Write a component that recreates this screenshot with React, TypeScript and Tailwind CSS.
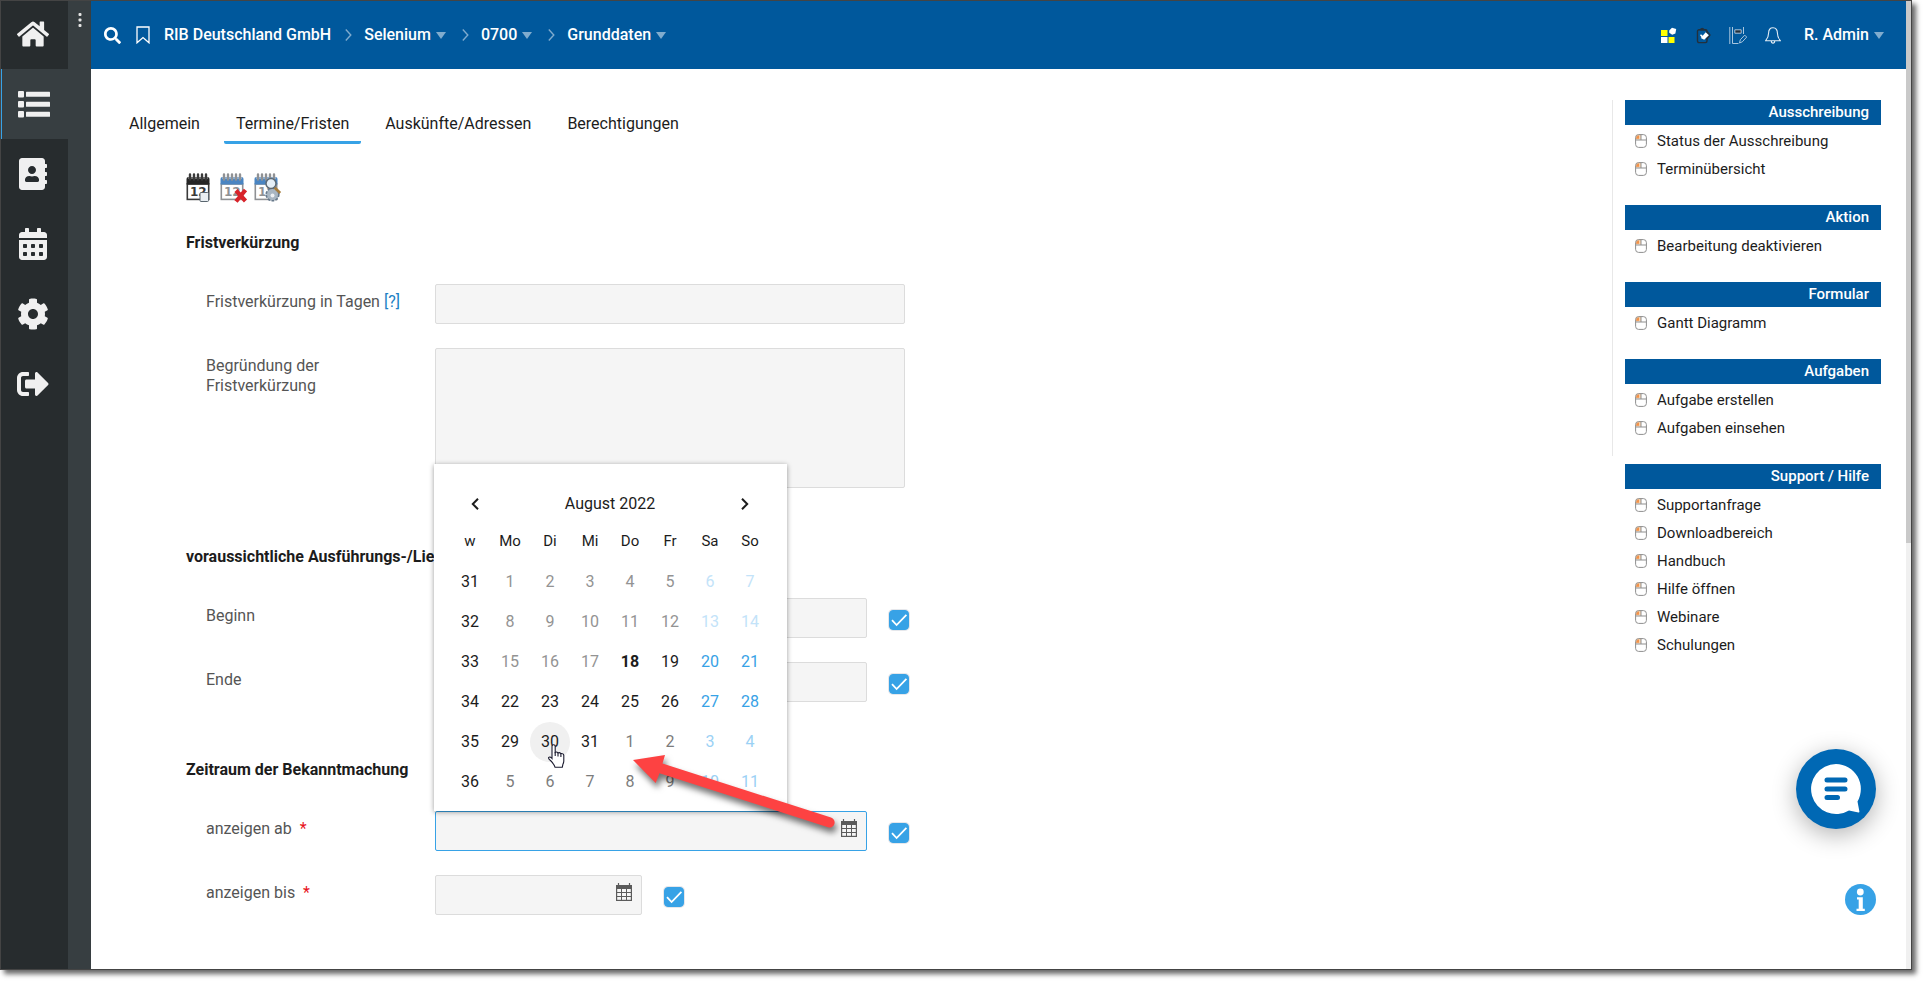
import { useState } from 'react';
import type { ReactNode } from 'react';
import { FaAddressBook, FaCalendarAlt, FaCog, FaHome, FaSearch, FaSignOutAlt } from 'react-icons/fa';

const crumbs = [
  { label: 'RIB Deutschland GmbH', menu: false },
  { label: 'Selenium', menu: true },
  { label: '0700', menu: true },
  { label: 'Grunddaten', menu: true }
];

const tabs = ['Allgemein', 'Termine/Fristen', 'Auskünfte/Adressen', 'Berechtigungen'];

const sideMenu = [
  { title: 'Ausschreibung', items: ['Status der Ausschreibung', 'Terminübersicht'] },
  { title: 'Aktion', items: ['Bearbeitung deaktivieren'] },
  { title: 'Formular', items: ['Gantt Diagramm'] },
  { title: 'Aufgaben', items: ['Aufgabe erstellen', 'Aufgaben einsehen'] }
];

const supportMenu = {
  title: 'Support / Hilfe',
  items: ['Supportanfrage', 'Downloadbereich', 'Handbuch', 'Hilfe öffnen', 'Webinare', 'Schulungen']
};

const weekDays = ['w', 'Mo', 'Di', 'Mi', 'Do', 'Fr', 'Sa', 'So'];

const weeks = [
  { week: 31, days: [1, 2, 3, 4, 5, 6, 7] },
  { week: 32, days: [8, 9, 10, 11, 12, 13, 14] },
  { week: 33, days: [15, 16, 17, 18, 19, 20, 21] },
  { week: 34, days: [22, 23, 24, 25, 26, 27, 28] },
  { week: 35, days: [29, 30, 31, 1, 2, 3, 4] },
  { week: 36, days: [5, 6, 7, 8, 9, 10, 11] }
];

const TODAY = 18;

// days before today are faded, the trailing days belong to September
function dayClass(index: number, col: number) {
  const dayNo = index * 7 + col + 1;
  const weekend = col > 4;
  if (dayNo === TODAY) return 'font-bold text-[#1c1c1c]';
  if (dayNo < TODAY) return weekend ? 'text-[#c3e3f9]' : 'text-[#939393]';
  if (dayNo > 31) return weekend ? 'text-[#9bd1f5]' : 'text-[#7c7c7c]';
  return weekend ? 'text-[#37a2e6]' : 'text-[#1c1c1c]';
}

function ListIcon() {
  return (
    <svg width="32" height="27" viewBox="0 0 32 27" fill="currentColor">
      {[0, 10, 20].map((y) => (
        <g key={y}>
          <rect x="0" y={y} width="6" height="6.5" rx="1" />
          <rect x="8" y={y + 0.8} width="24" height="5" rx="0.5" />
        </g>
      ))}
    </svg>
  );
}

function Caret() {
  return (
    <svg width="10" height="7" viewBox="0 0 10 7" fill="#fff" fillOpacity="0.5">
      <path d="M0 0h10L5 7z" />
    </svg>
  );
}

function CrumbArrow() {
  return (
    <svg width="7" height="12" viewBox="0 0 7 12" fill="none" stroke="#7fabce" strokeWidth="1.4">
      <path d="M.8.6 5.8 6 .8 11.4" />
    </svg>
  );
}

function MouseIcon() {
  return (
    <svg width="12" height="14" viewBox="0 0 12 14" fill="none" className="shrink-0">
      <path d="M.6 2.6q0-2 2-2H6v5H.6z" fill="#fbd3ac" />
      <path d="M1 4.8 1.6 2.4 4 1.2v3.6z" fill="#f2924a" />
      <rect x=".6" y=".6" width="10.8" height="12.8" rx="3" stroke="#8f8f8f" />
      <path d="M.6 6h10.8M6 .6V6" stroke="#8f8f8f" />
    </svg>
  );
}

function CalendarSheet({ head, line, children }: { head: string; line: string; children: ReactNode }) {
  return (
    <svg width="28" height="30" viewBox="0 0 28 30">
      <rect x="1.3" y="11" width="21.4" height="15.4" fill="#fff" stroke={line} strokeWidth="1.6" />
      <text x="4" y="22.5" fontSize="12" fontWeight="700" fontFamily="DejaVu Sans, sans-serif" fill={line}>12</text>
      <path d="M.5 6q0-2 2-2h19q2 0 2 2v5.6H.5z" fill={head} />
      <path d="M4 1v5M8 1v5M12 1v5M16 1v5M20 1v5" stroke="#fff" strokeOpacity="0.6" strokeWidth="3.2" />
      <path d="M4 1.5v5M8 1.5v5M12 1.5v5M16 1.5v5M20 1.5v5" stroke={line} strokeWidth="2.4" strokeLinecap="round" />
      {children}
    </svg>
  );
}

function FieldCalendarIcon() {
  return (
    <svg width="16" height="18" viewBox="0 0 16 18" fill="none" stroke="#5b5b5b">
      <path d="M2.5 0v3M13.5 0v3" strokeWidth="1.2" />
      <path d="M0 2h16v4H0z" fill="#5b5b5b" stroke="none" />
      <rect x=".6" y="2.6" width="14.8" height="14.8" strokeWidth="1.2" />
      <path d="M5.5 5v12M10.5 5v12M0 9.5h16M0 13.5h16" />
    </svg>
  );
}

function Check({ label }: { label: string }) {
  return (
    <span className="relative mt-3 h-5 w-5 shrink-0">
      <input
        type="checkbox"
        defaultChecked
        aria-label={label}
        className="peer block h-5 w-5 appearance-none rounded border border-gray-300 bg-white ring-1 ring-gray-200 checked:border-[#37a2e6] checked:bg-[#37a2e6]"
      />
      <svg
        viewBox="0 0 20 20"
        className="pointer-events-none absolute inset-0 hidden h-5 w-5 peer-checked:block"
        fill="none"
        stroke="#fff"
        strokeWidth="1.8"
      >
        <path d="M3 10.2 7.6 15 17.4 4.8" />
      </svg>
    </span>
  );
}

function Row({ id, label, children }: { id: string; label: ReactNode; children: ReactNode }) {
  return (
    <div className="flex items-start pl-5">
      <div className="w-[229px] shrink-0 pt-2 pr-5 leading-5 text-[#555]">
        <label htmlFor={id}>{label}</label>
        {id === 'tage' && <a href="#hilfe" className="text-[#1c7fc4]"> [?]</a>}
      </div>
      {children}
    </div>
  );
}

const fieldClass = 'block w-full rounded-xs border bg-[#f5f5f5] px-3 outline-none';

function DateRow({ id, label, required, short, active, picker, children }: {
  id: string;
  label: string;
  required?: boolean;
  short?: boolean;
  active?: boolean;
  picker?: boolean;
  children?: ReactNode;
}) {
  return (
    <Row id={id} label={<>{label}{required && <span className="pl-1 text-[#e8131a]"> *</span>}</>}>
      <div className="flex gap-[22px]">
        <div className={short ? 'relative w-[207px]' : 'relative w-[432px]'}>
          <input id={id} type="text" className={`${fieldClass} h-10 ${active ? 'border-[#37a2e6]' : 'border-[#dcdcdc]'}`} />
          {picker && (
            <button type="button" aria-label="Kalender" className="absolute top-2 right-[10px]">
              <FieldCalendarIcon />
            </button>
          )}
          {children}
        </div>
        <Check label={label} />
      </div>
    </Row>
  );
}

function DatePicker() {
  return (
    <div className="absolute bottom-full -left-px z-10 w-[353px] bg-white pt-5 pr-[17px] pb-[9px] pl-4 text-[#1c1c1c] shadow-[0_1px_5px_rgba(0,0,0,0.4)]">
      <div className="flex h-10 items-center justify-between px-[21px]">
        <button type="button" aria-label="Voriger Monat">
          <svg width="8" height="12" viewBox="0 0 8 12" fill="none" stroke="currentColor" strokeWidth="2"><path d="M7 .8 1.8 6 7 11.2" /></svg>
        </button>
        <span>August 2022</span>
        <button type="button" aria-label="Nächster Monat">
          <svg width="8" height="12" viewBox="0 0 8 12" fill="none" stroke="currentColor" strokeWidth="2"><path d="M1 .8 6.2 6 1 11.2" /></svg>
        </button>
      </div>
      <table className="w-full table-fixed text-center">
        <thead>
          <tr className="h-[38px] text-[15px]">
            {weekDays.map((d) => <th key={d} className="p-0 pb-[3px] font-normal">{d}</th>)}
          </tr>
        </thead>
        <tbody>
          {weeks.map((w, i) => (
            <tr key={w.week} className="h-10">
              <th className="p-0 font-normal">{w.week}</th>
              {w.days.map((day, col) => {
                const hovered = day === 30;
                return (
                  <td key={day} className="p-0">
                    <button type="button" className={`relative block h-10 w-full rounded-full ${dayClass(i, col)} ${hovered ? 'bg-[#f0f0f0]' : ''}`}>
                      {day}
                      {hovered && (
                        <svg width="18" height="24" viewBox="0 0 18 24" className="absolute top-[22px] left-[17px]">
                          <path
                            d="M5 14.5V2.4Q5 .8 6.6.8t1.6 1.6v6q1.5-1 2.8.5 1.6-.9 2.8.7 2.8-.4 3 2V17q0 1.5-.8 3l-.7 3.2H8q-1-3-4-6.2Q1 14.5 1.6 13.6q1.2-1.5 3.4.9z"
                            fill="#fff"
                            stroke="#1a1a2e"
                            strokeWidth="1.1"
                          />
                          <path d="M8.2 8v4M11 9v3.4M13.9 10v3" stroke="#1a1a2e" strokeWidth="1.1" />
                        </svg>
                      )}
                    </button>
                  </td>
                );
              })}
            </tr>
          ))}
        </tbody>
      </table>
    </div>
  );
}

function HintArrow() {
  return (
    <svg width="220" height="100" viewBox="0 0 220 100" className="pointer-events-none absolute -top-[62px] left-[190px] z-20 drop-shadow-[2px_5px_3px_rgba(0,0,0,0.55)]">
      <path d="M8 11 40 6 37.5 14.6 206 68.5a5 5 0 0 1-3 9.8L34.500 24.200 30.700 34z" fill="#fd4242" />
    </svg>
  );
}

function Section({ title, className, children }: { title: string; className: string; children: ReactNode }) {
  return (
    <section className={className}>
      <h2 className="mb-[29px] leading-6 font-bold text-[#1c1c1c]">{title}</h2>
      <div className="flex flex-col gap-6">{children}</div>
    </section>
  );
}

function MenuBlock({ title, items }: { title: string; items: string[] }) {
  return (
    <section className="text-[15px]">
      <h3 className="mb-[2px] bg-[#00589c] px-3 text-right leading-[25px] font-medium text-white">{title}</h3>
      <ul>
        {items.map((item) => (
          <li key={item}>
            <a href="#menu" className="flex h-7 items-center gap-[10px] pl-[10px] text-[#1c1c1c]">
              <MouseIcon />
              {item}
            </a>
          </li>
        ))}
      </ul>
    </section>
  );
}

export default function App() {
  const [tab, setTab] = useState('Termine/Fristen');

  const navClass = 'flex h-[70px] items-center justify-center pr-[3px]';

  return (
    <div className="flex h-screen min-h-[900px] bg-white pr-[15px] pb-[15px] font-[Roboto,sans-serif] text-base">
      <div className="flex flex-1 border border-[#444] shadow-[4px_4px_5px_rgba(0,0,0,0.6)]">
        <nav className="w-[67px] shrink-0 bg-[#272c2e] text-[#f0f0f0]">
          <a href="#start" aria-label="Start" className="flex h-[68px] items-center justify-center pr-[3px] pb-[2px]"><FaHome size={32} /></a>
          <a href="#liste" aria-label="Liste" className={`${navClass} border-l border-[#37a2e6] bg-[#373e41]`}><ListIcon /></a>
          <a href="#adressen" aria-label="Adressbuch" className={navClass}><FaAddressBook size={32} /></a>
          <a href="#kalender" aria-label="Kalender" className={navClass}><FaCalendarAlt size={32} /></a>
          <a href="#einstellungen" aria-label="Einstellungen" className={navClass}><FaCog size={32} /></a>
          <a href="#abmelden" aria-label="Abmelden" className={navClass}><FaSignOutAlt size={32} /></a>
        </nav>
        <div className="w-[23px] shrink-0 bg-[#373e41] pt-3">
          <button type="button" aria-label="Menü" className="block pl-[10px]">
            <svg width="4" height="14" viewBox="0 0 4 14" fill="#e4e4e4">
              <rect x=".5" y="0" width="3" height="3" rx="1" />
              <rect x=".5" y="5.5" width="3" height="3" rx="1" />
              <rect x=".5" y="11" width="3" height="3" rx="1" />
            </svg>
          </button>
        </div>

        <div className="relative flex min-w-0 flex-1 flex-col">
          <header className="flex h-[68px] items-center bg-[#00589c] pr-[22px] pl-[13px] font-medium text-white">
            <button type="button" aria-label="Suche"><FaSearch size={17} /></button>
            <button type="button" aria-label="Lesezeichen" className="ml-[15px]">
              <svg width="14" height="18" viewBox="0 0 14 18" fill="none" stroke="#fff" strokeWidth="1.3">
                <path d="M1 1h12v15.8l-6-5.3-6 5.3z" />
              </svg>
            </button>
            <ol className="ml-[14px] flex items-center">
              {crumbs.map((c, i) => (
                <li key={c.label} className="flex items-center">
                  {i > 0 && <span className={i === 1 ? 'pr-3 pl-[14px]' : 'pr-3 pl-4'}><CrumbArrow /></span>}
                  <a href="#crumb" className="flex items-center gap-[5px]">
                    {c.label}
                    {c.menu && <Caret />}
                  </a>
                </li>
              ))}
            </ol>
            <div className="ml-auto flex items-center">
              <button type="button" aria-label="Module">
                <svg width="16" height="16" viewBox="0 0 16 16">
                  <path d="M0 3h6.500v6H0zM7.500 10h6v6h-6z" fill="#ffff00" />
                  <path d="M0 10h6.500v6H0zM8.200 3.500 11 .8l4.200 1.300-.8 4.400-3.200 1.300-3-2z" fill="#fff" />
                </svg>
              </button>
              <button type="button" aria-label="Aufgaben" className="ml-[19px]">
                <svg width="15" height="17" viewBox="0 0 15 17" fill="none">
                  <rect x="1.500" y="2.800" width="9.500" height="12.800" rx="1.500" stroke="#23303c" strokeWidth="1.400" />
                  <path d="M3.500 3.500Q4 .8 6.200.8T9 3.500z" fill="#23303c" />
                  <path d="M9.500 3 11.500 5l2.500 3-3.500 4.500" stroke="#23303c" strokeWidth="1.300" />
                  <path d="m4 8.200 1-1 1.700 1.600L9.700 5.300l3.100 2.900-4.600 4.600-3.400-1.700.8-.9z" fill="#fff" />
                </svg>
              </button>
              <button type="button" aria-label="Protokoll" className="ml-[18px]">
                <svg width="18" height="17" viewBox="0 0 18 17" fill="none" stroke="#a8c6df">
                  <path d="M.8 0v17M3.500 0v16.500h6M14.500 0v7" />
                  <path d="M5.800 2.800h6.400v3.400H5.800z" fill="#23303c" />
                  <path d="m10.500 16 .8-3.200 4.400-4.700 2 2-4.400 4.700z" />
                </svg>
              </button>
              <button type="button" aria-label="Benachrichtigungen" className="ml-[18px]">
                <svg width="16" height="17" viewBox="0 0 16 17" fill="none" stroke="#e3edf5" strokeWidth="1.1">
                  <path d="M8 .8C4.800.8 3.600 3.200 3.600 6c0 4-1 5.600-2.900 7.700h14.600C13.400 11.600 12.400 10 12.400 6c0-2.800-1.200-5.200-4.400-5.200zM6.300 14c0 2.800 3.400 2.800 3.400 0" />
                </svg>
              </button>
              <button type="button" className="ml-[23px] flex items-center gap-[5px]">
                R. Admin
                <Caret />
              </button>
            </div>
          </header>

          <main className="flex flex-1 items-start">
            <div className="min-w-0 flex-1">
              <div role="tablist" className="flex gap-3 pt-[35px] pl-[26px]">
                {tabs.map((t) => (
                  <button
                    key={t}
                    type="button"
                    role="tab"
                    aria-selected={t === tab}
                    onClick={() => setTab(t)}
                    className={`h-10 rounded-xs border-b-3 px-3 pt-[3px] text-[#1c1c1c] ${t === tab ? 'border-[#37a2e6]' : 'border-transparent'}`}
                  >
                    {t}
                  </button>
                ))}
              </div>

              <form className="pl-[95px]">
                <div className="flex gap-[6px] pt-[29px] pb-7">
                  <button type="button" aria-label="Termin anlegen">
                    <CalendarSheet head="#262626" line="#3a3a3a">
                      <rect x="14" y="19.500" width="8.500" height="9" rx="1" fill="#e9eef2" stroke="#59656e" />
                    </CalendarSheet>
                  </button>
                  <button type="button" aria-label="Termin löschen">
                    <CalendarSheet head="#4a85c2" line="#8f9194">
                      <path d="m16 17.500 9.500 10.500M25.500 17 16 28.500" stroke="#d8232a" strokeWidth="4.200" />
                    </CalendarSheet>
                  </button>
                  <button type="button" aria-label="Termin suchen">
                    <CalendarSheet head="#4a85c2" line="#8f9194">
                      <circle cx="18.500" cy="21.500" r="6.300" fill="#a9b6c2" stroke="#66788a" strokeWidth="1.600" strokeDasharray="2.600 1.400" />
                      <circle cx="18.500" cy="22.500" r="2" fill="#eef1f4" />
                      <path d="m20.500 14.500 5.700 5.500" stroke="#a67c3c" strokeWidth="2.600" />
                      <circle cx="17" cy="10.500" r="5" fill="#e6f0f8" stroke="#5d6a75" strokeWidth="1.500" />
                    </CalendarSheet>
                  </button>
                </div>

                <Section title="Fristverkürzung" className="">
                  <Row id="tage" label="Fristverkürzung in Tagen">
                    <input id="tage" type="text" className={`${fieldClass} h-10 max-w-[470px] border-[#dcdcdc]`} />
                  </Row>
                  <Row id="grund" label="Begründung der Fristverkürzung">
                    <textarea id="grund" className={`${fieldClass} h-[140px] max-w-[470px] resize-none border-[#dcdcdc]`} />
                  </Row>
                </Section>

                <Section title="voraussichtliche Ausführungs-/Lieferfrist" className="mt-[57px]">
                  <DateRow id="beginn" label="Beginn" />
                  <DateRow id="ende" label="Ende" />
                </Section>

                <Section title="Zeitraum der Bekanntmachung" className="mt-14">
                  <DateRow id="ab" label="anzeigen ab" required active picker>
                    <DatePicker />
                    <HintArrow />
                  </DateRow>
                  <DateRow id="bis" label="anzeigen bis" required short picker />
                </Section>
              </form>
            </div>

            <aside className="mt-[31px] mr-[25px] w-[269px] shrink-0">
              <div className="mb-2 flex flex-col gap-[22px] border-l border-[#e8e8e8] pb-[14px] pl-3">
                {sideMenu.map((m) => <MenuBlock key={m.title} {...m} />)}
              </div>
              <div className="pl-[13px]">
                <MenuBlock {...supportMenu} />
              </div>
            </aside>
          </main>

          <div className="absolute right-[30px] bottom-[54px] flex flex-col items-end gap-[55px]">
            <button type="button" aria-label="Chat" className="h-20 w-20 rounded-full bg-[#0068b4] shadow-[0_6px_24px_rgba(0,0,0,0.3)]">
              <svg width="80" height="80" viewBox="0 0 80 80">
                <path d="M40 15a25 25 0 1 0 13 46.400l9.500 2.100q1 .2.900-1L61.500 52.500A25 25 0 0 0 40 15z" fill="#fff" />
                <path d="M31 31h18M31 40h18M31 48.600h10.500" stroke="#0068b4" strokeWidth="5" strokeLinecap="round" />
              </svg>
            </button>
            <button type="button" aria-label="Information">
              <svg width="31" height="31" viewBox="0 0 31 31">
                <circle cx="15.500" cy="15.500" r="15.500" fill="#37a2e6" />
                <circle cx="15.300" cy="8" r="3.400" fill="#fff" />
                <path d="M12 13.300h5.800v11.400h2v2.300h-8.300v-2.300h2.200v-9.100H12z" fill="#fff" />
              </svg>
            </button>
          </div>
        </div>

        <div className="w-[5px] shrink-0 bg-[#f0f0f0]">
          <div className="h-[56%] bg-[#c9c9c9]" />
        </div>
      </div>
    </div>
  );
}
